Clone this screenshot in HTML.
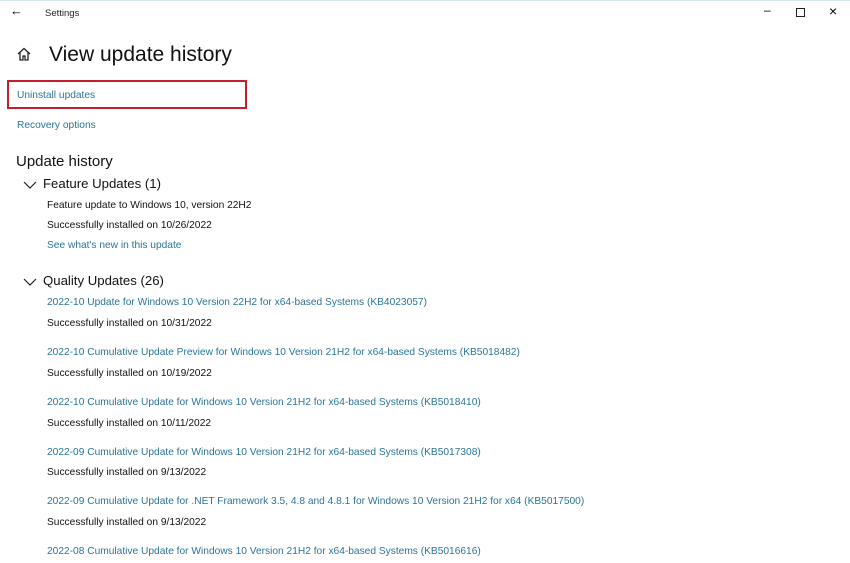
<!DOCTYPE html>
<html><head><style>
body{margin:0;width:850px;height:563px;background:#fff;font-family:"Liberation Sans",sans-serif;position:relative;overflow:hidden;color:#000}
.a{position:absolute;white-space:nowrap}
.l{color:#2b7497;font-size:10.2px}
.t{font-size:10.2px;color:#111}
.h{font-size:13.2px;color:#111}
</style></head><body>
<div style="position:absolute;left:0;top:0;width:850px;height:1px;background:#cfe8ee"></div>
<div class="a" style="left:10px;top:3px;font-size:13px">&#8592;</div>
<div class="a" style="left:45px;top:8px;font-size:9.5px;color:#222">Settings</div>
<div class="a" style="left:764px;top:3px;font-size:12px">&#8211;</div>
<div style="position:absolute;left:796px;top:8px;width:7px;height:7px;border:1px solid #222"></div>
<div class="a" style="left:829px;top:3px;font-size:14px">&#215;</div>
<svg class="a" style="left:16px;top:46px" width="16" height="16" viewBox="0 0 16 16"><path d="M2 8 L8 2.5 L14 8 M4 6.5 V14 H7 V10 H9 V14 H12 V6.5" fill="none" stroke="#222" stroke-width="1.3"/></svg>
<div class="a" style="left:49px;top:43px;font-size:21px;color:#111">View update history</div>
<div style="position:absolute;left:7px;top:80px;width:236px;height:25px;border:2px solid #c3202c"></div>
<div class="a l" style="left:17px;top:90px">Uninstall updates</div>
<div class="a l" style="left:17px;top:120px">Recovery options</div>
<div class="a" style="left:16px;top:153px;font-size:15px;color:#111">Update history</div>
<svg class="a" style="left:23px;top:181px" width="14" height="9"><path d="M1 1 L7 7 L13 1" fill="none" stroke="#222" stroke-width="1.2"/></svg>
<div class="a h" style="left:43px;top:176px">Feature Updates (1)</div>
<div class="a t" style="left:47px;top:200px">Feature update to Windows 10, version 22H2</div>
<div class="a t" style="left:47px;top:220px">Successfully installed on 10/26/2022</div>
<div class="a l" style="left:47px;top:240px">See what's new in this update</div>
<svg class="a" style="left:23px;top:278px" width="14" height="9"><path d="M1 1 L7 7 L13 1" fill="none" stroke="#222" stroke-width="1.2"/></svg>
<div class="a h" style="left:43px;top:273px">Quality Updates (26)</div>
<div class="a l" style="left:47px;top:297px">2022-10 Update for Windows 10 Version 22H2 for x64-based Systems (KB4023057)</div>
<div class="a t" style="left:47px;top:318px">Successfully installed on 10/31/2022</div>
<div class="a l" style="left:47px;top:347px">2022-10 Cumulative Update Preview for Windows 10 Version 21H2 for x64-based Systems (KB5018482)</div>
<div class="a t" style="left:47px;top:368px">Successfully installed on 10/19/2022</div>
<div class="a l" style="left:47px;top:397px">2022-10 Cumulative Update for Windows 10 Version 21H2 for x64-based Systems (KB5018410)</div>
<div class="a t" style="left:47px;top:418px">Successfully installed on 10/11/2022</div>
<div class="a l" style="left:47px;top:447px">2022-09 Cumulative Update for Windows 10 Version 21H2 for x64-based Systems (KB5017308)</div>
<div class="a t" style="left:47px;top:467px">Successfully installed on 9/13/2022</div>
<div class="a l" style="left:47px;top:496px">2022-09 Cumulative Update for .NET Framework 3.5, 4.8 and 4.8.1 for Windows 10 Version 21H2 for x64 (KB5017500)</div>
<div class="a t" style="left:47px;top:517px">Successfully installed on 9/13/2022</div>
<div class="a l" style="left:47px;top:546px">2022-08 Cumulative Update for Windows 10 Version 21H2 for x64-based Systems (KB5016616)</div>
</body></html>
